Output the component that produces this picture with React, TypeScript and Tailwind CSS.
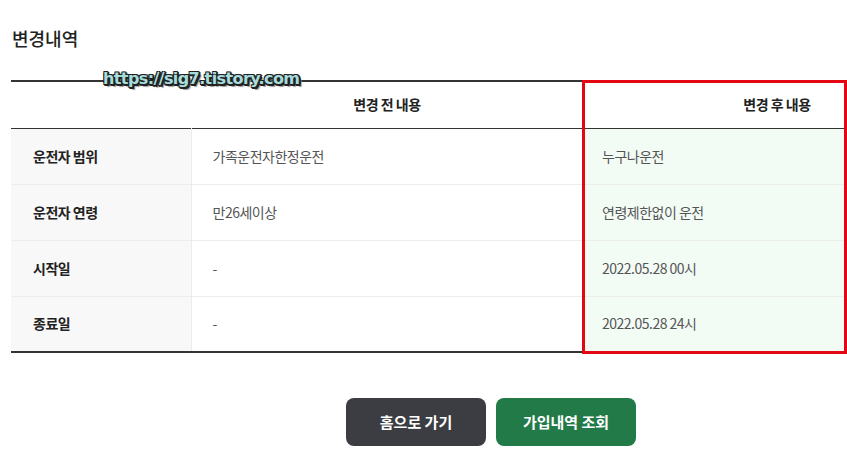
import React from "react";

const rows = [
    { label: "운전자 범위", before: "가족운전자한정운전", after: "누구나운전" },
    { label: "운전자 연령", before: "만26세이상", after: "연령제한없이 운전" },
    { label: "시작일", before: "-", after: "2022.05.28 00시" },
    { label: "종료일", before: "-", after: "2022.05.28 24시" },
];

export default function App() {
    return (
        <div className="relative w-[847px] h-[473px] overflow-hidden bg-white text-[#333] font-['Noto_Sans_CJK_KR','Noto_Sans',sans-serif]">
            <div className="w-[960px] ml-[11px]">
                <h2 className="pt-[25px] pl-[1px] h-[80px] text-[18px] leading-[26px] font-medium text-[#222]">변경내역</h2>

                <table className="w-full table-fixed border-collapse border-t-2 border-b-2 border-t-[#333] border-b-[#333] text-[14px] tracking-[-0.5px]">
                    <colgroup>
                        <col className="w-[180px]" />
                        <col className="w-[392px]" />
                        <col />
                    </colgroup>
                    <thead>
                        <tr className="h-[47px] border-b border-[#333]">
                            <th></th>
                            <th className="font-bold text-[#222]">변경 전 내용</th>
                            <th className="font-bold text-[#222]">변경 후 내용</th>
                        </tr>
                    </thead>
                    <tbody>
                        {rows.map((row, i) => (
                            <tr key={i} className={`h-[56px] ${i < rows.length - 1 ? "border-b border-[#ececec]" : ""}`}>
                                <td className="bg-[#f8f8f8] border-r border-[#ececec] pl-[22px] font-bold text-[#222]">{row.label}</td>
                                <td className="pl-[21px] text-[#555]">{row.before}</td>
                                <td className="pl-[19px] bg-[#f3fbf5] text-[#555]">{row.after}</td>
                            </tr>
                        ))}
                    </tbody>
                </table>

                <div className="flex justify-center gap-[10px] mt-[45px]">
                    <button className="w-[140px] h-[48px] rounded-[8px] bg-[#3c3d42] text-white text-[15px] font-bold">홈으로 가기</button>
                    <button className="w-[140px] h-[48px] rounded-[8px] bg-[#217a47] text-white text-[15px] font-bold">가입내역 조회</button>
                </div>
            </div>

            {/* red highlight annotation */}
            <div className="absolute left-[582px] top-[80px] w-[265px] h-[274px] border-[3px] border-[#e30613] pointer-events-none"></div>

            {/* watermark */}
            <div className="absolute left-[103px] top-[68px] text-[16px] leading-[22px] font-bold text-[#a6dcdc] font-['DejaVu_Sans',sans-serif] tracking-[-0.6px] [text-shadow:-1px_-1px_0_#222,1px_-1px_0_#222,-1px_1px_0_#222,1px_1px_0_#222,0_2px_0_#222,2px_0_0_#222,2px_2px_0_#222,3px_3px_1px_#999]">
                https://sig7.tistory.com
            </div>
        </div>
    );
}
